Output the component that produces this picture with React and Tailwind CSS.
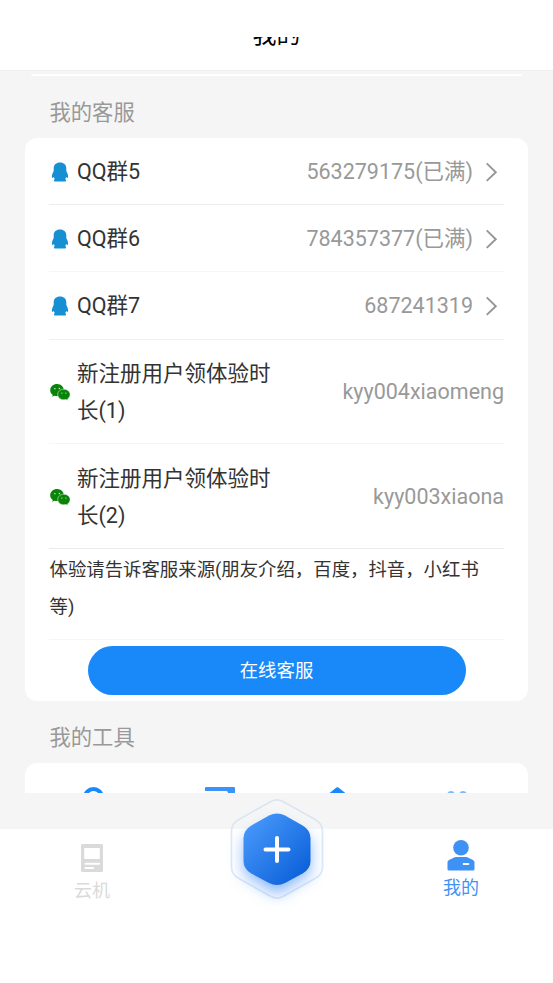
import React from 'react';

const groups = [
  { name: 'QQ群5', value: '563279175(已满)', line: 'border-[#ebebf0]' },
  { name: 'QQ群6', value: '784357377(已满)', line: 'border-[#f5f5f5]' },
  { name: 'QQ群7', value: '687241319', line: 'border-[#f0f0f0]' },
];

const wechats = [
  { name: '新注册用户领体验时长(1)', value: 'kyy004xiaomeng', line: 'border-[#f5f5f5]' },
  { name: '新注册用户领体验时长(2)', value: 'kyy003xiaona', line: 'border-[#ebebeb]' },
];

const QQIcon = () => (
  <svg className="w-[20px] h-[20px] ml-px shrink-0" viewBox="0 0 20 20" fill="#1790d3">
    <path d="M10 .4C6.100.4 3.700 2.700 3.700 6v3C2.700 10.800 1.900 12.800 1.900 14.600c0 1.200.4 1.500.9 1.200.4-.2.8-.6 1.100-.9.2.8.5 1.500.9 2.200-.5.300-.9.9-.9 1.500 0 .7.500 1 1.400 1h3.400c.6 0 1-.1 1.300-.2.300.1.700.2 1.300.2h3.400c.9 0 1.400-.3 1.400-1 0-.6-.4-1.200-.9-1.500.4-.7.7-1.400.9-2.200.3.300.7.700 1.100.9.500.3.900 0 .9-1.200 0-1.800-.8-3.800-1.800-5.600V6C16.300 2.700 13.900.4 10 .4z" />
  </svg>
);

const WechatIcon = () => (
  <svg className="w-[20px] h-[20px] ml-px shrink-0" viewBox="0 0 20 20">
    <path d="M7.100 2C3.300 2 .2 4.700.2 8.200c0 1.900 1 3.600 2.600 4.700l-.6 1.900 2.400-1.100c.8.2 1.600.4 2.500.4 3.800 0 6.800-2.700 6.800-5.900S10.900 2 7.100 2z" fill="#098409" />
    <path d="M13.900 7.200c-3.500 0-6.200 2.300-6.200 5.300s2.700 5.300 6.200 5.300c.8 0 1.500-.1 2.100-.3l2 1-.4-1.600c1.500-.9 2.500-2.500 2.500-4.400 0-3-2.800-5.300-6.200-5.300z" fill="#098409" stroke="#fff" strokeWidth=".5" />
    <g fill="#fff">
      <circle cx="4.900" cy="6.700" r=".65" />
      <circle cx="9.300" cy="6.500" r=".65" />
      <circle cx="11.900" cy="11" r=".6" />
      <circle cx="15.900" cy="11" r=".6" />
    </g>
  </svg>
);

const Arrow = () => (
  <svg className="w-[13px] h-[20px] ml-[12px] mr-[6px] shrink-0" viewBox="0 0 13 20" fill="none" stroke="#959595" strokeWidth="1.9">
    <path d="M1.700 1.400 10.800 10.200 1.700 18.900" />
  </svg>
);

const PlusButton = () => (
  <svg className="w-[124px] h-[136px]" viewBox="0 0 124 136">
    <defs>
      <linearGradient id="hex" x1="0" y1="0" x2="1" y2="1">
        <stop offset="0.08" stopColor="#4899fb" />
        <stop offset="0.92" stopColor="#0a5fd8" />
      </linearGradient>
      <filter id="glow" x="-50%" y="-50%" width="200%" height="200%">
        <feGaussianBlur stdDeviation="7.500" />
      </filter>
    </defs>
    {/* contour */}
    <path
      d="M56 20.500q6-3.200 12 0l32.500 18.200q7 4 7 11.500v35.600q0 7.500-7 11.500L68 115.500q-6 3.200-12 0L23.500 97.300q-7-4-7-11.500V50.200q0-7.500 7-11.500Z"
      fill="#fff" fillOpacity=".15" stroke="#c8dbf0" strokeOpacity=".6" strokeWidth="1.700"
    />
    {/* halo */}
    <path d="M62 41 95 59v34L62 114 29 93V59Z" fill="#4d90f7" fillOpacity=".65" filter="url(#glow)" />
    <path d="M54 34.500q8-3.800 16 0l18 10.200q7.500 4.500 7.500 12.500v22.600q0 8-7.500 12.500L70 102q-8 3.800-16 0L36 92.300q-7.500-4.500-7.500-12.500V57.200q0-8 7.500-12.500Z" fill="url(#hex)" />
    <path d="M62 57v23M50.500 68.500h23" stroke="#fff" strokeWidth="4" strokeLinecap="round" />
  </svg>
);

const SectionTitle = ({ children }) => (
  <h2 className="h-[62px] shrink-0 pl-[49.500px] pt-[11px] flex items-center text-[21.300px] font-normal text-[#999]">{children}</h2>
);

export default function App() {
  return (
    <div className="w-full h-[983px] flex flex-col overflow-hidden bg-white text-[#333] font-['Roboto','Noto_Sans_CJK_SC',sans-serif]">
      <header className="h-[71px] shrink-0 pt-[37px] border-b border-[#eee]">
        <div className="h-[33px] overflow-hidden">
          <h1 className="-mt-[20px] text-center text-[24px] leading-[36px] font-normal text-black">我的</h1>
        </div>
      </header>

      <main className="h-[722px] shrink-0 overflow-hidden bg-[#f5f5f5] flex flex-col">
        <div className="h-[2px] mt-[3px] mx-[31px] shrink-0 bg-white rounded-b-xl" />
        <SectionTitle>我的客服</SectionTitle>

        <section className="mx-[25px] px-[24px] h-[563px] shrink-0 bg-white rounded-xl text-[21.500px]">
          {groups.map((g) => (
            <div key={g.name} className={`h-[67.500px] first:h-[66.800px] pt-[1.500px] flex items-center border-b ${g.line}`}>
              <QQIcon />
              <span className="ml-[7px] flex-1">{g.name}</span>
              <span className="text-[#999]">{g.value}</span>
              <Arrow />
            </div>
          ))}
          {wechats.map((w) => (
            <div key={w.name} className={`h-[104.500px] pt-[1.500px] flex items-center border-b ${w.line}`}>
              <WechatIcon />
              <span className="ml-[7px] w-[200px] leading-[37px]">{w.name}</span>
              <span className="ml-auto text-[#999]">{w.value}</span>
            </div>
          ))}
          <p className="h-[91px] pt-[2px] pl-[.500px] pr-[4px] text-[18.400px] leading-[37px] border-b border-[#f5f5f5]">
            体验请告诉客服来源(朋友介绍，百度，抖音，小红书等)
          </p>
          <button className="block w-[378px] h-[49px] mt-[6px] ml-[38.500px] pt-[2px] rounded-full bg-[#1989fa] text-white text-[18.400px]">
            在线客服
          </button>
        </section>

        <SectionTitle>我的工具</SectionTitle>
        <section className="mx-[25px] px-[8px] pt-[24px] h-[120px] shrink-0 bg-white rounded-xl grid grid-cols-4 justify-items-center">
          <svg className="w-[32px] h-[32px]" viewBox="0 0 32 32" fill="none">
            <circle cx="15.500" cy="10.500" r="8.500" stroke="#1989fa" strokeWidth="4" />
          </svg>
          <svg className="w-[32px] h-[32px] ml-[8px]" viewBox="0 0 32 32">
            <path d="M2 0h28a1 1 0 0 1 1 1v27h-7V6q0-2-2-2H1V1q0-1 1-1Z" fill="#3a92fa" />
          </svg>
          <svg className="w-[32px] h-[32px]" viewBox="0 0 32 32">
            <path d="M15.400.6q1-.8 2 0L32 12v17H1V12Z" fill="#1989fa" />
          </svg>
          <svg className="w-[32px] h-[32px] mr-[4px]" viewBox="0 0 32 32" fill="#7eb9fc">
            <circle cx="10" cy="7.800" r="3.800" />
            <circle cx="22" cy="7.800" r="3.800" />
          </svg>
        </section>
      </main>

      <div className="h-[36px] shrink-0 bg-[#f5f5f5]" />

      <nav className="relative flex-1 flex justify-between bg-white text-[18px] leading-[24px]">
        <a className="w-[184px] pt-[15px] flex flex-col items-center text-[#dadada]">
          <svg className="w-[22px] h-[28px] mb-[7px]" viewBox="0 0 22 28">
            <rect width="22" height="28" rx="1.500" fill="#dadada" />
            <g fill="#fff">
              <rect x="3.200" y="4" width="15.600" height="11" rx=".8" />
              <rect x="3.500" y="18.700" width="15.500" height="2" rx="1" />
              <rect x="3.500" y="22.900" width="9.500" height="2" rx="1" />
            </g>
          </svg>
          云机
        </a>
        <a className="w-[184px] pt-[11px] flex flex-col items-center text-[#3f92f5]">
          <svg className="w-[28px] h-[31px] mb-[5px]" viewBox="0 0 28 31">
            <circle cx="14" cy="7.800" r="7.800" fill="#3f92f5" />
            <path d="M8.300 17h11.400l6.300 3q1.500.8 1.500 2.500V29q0 1.500-1.500 1.500H2Q.5 30.500.5 29v-6.500Q.5 20.800 2 20Z" fill="#3f92f5" />
            <path d="M16.700 24h4.600" stroke="#fff" strokeWidth="2" strokeLinecap="round" />
          </svg>
          我的
        </a>
        <div className="absolute left-[215px] top-[-48px]">
          <PlusButton />
        </div>
      </nav>
    </div>
  );
}
